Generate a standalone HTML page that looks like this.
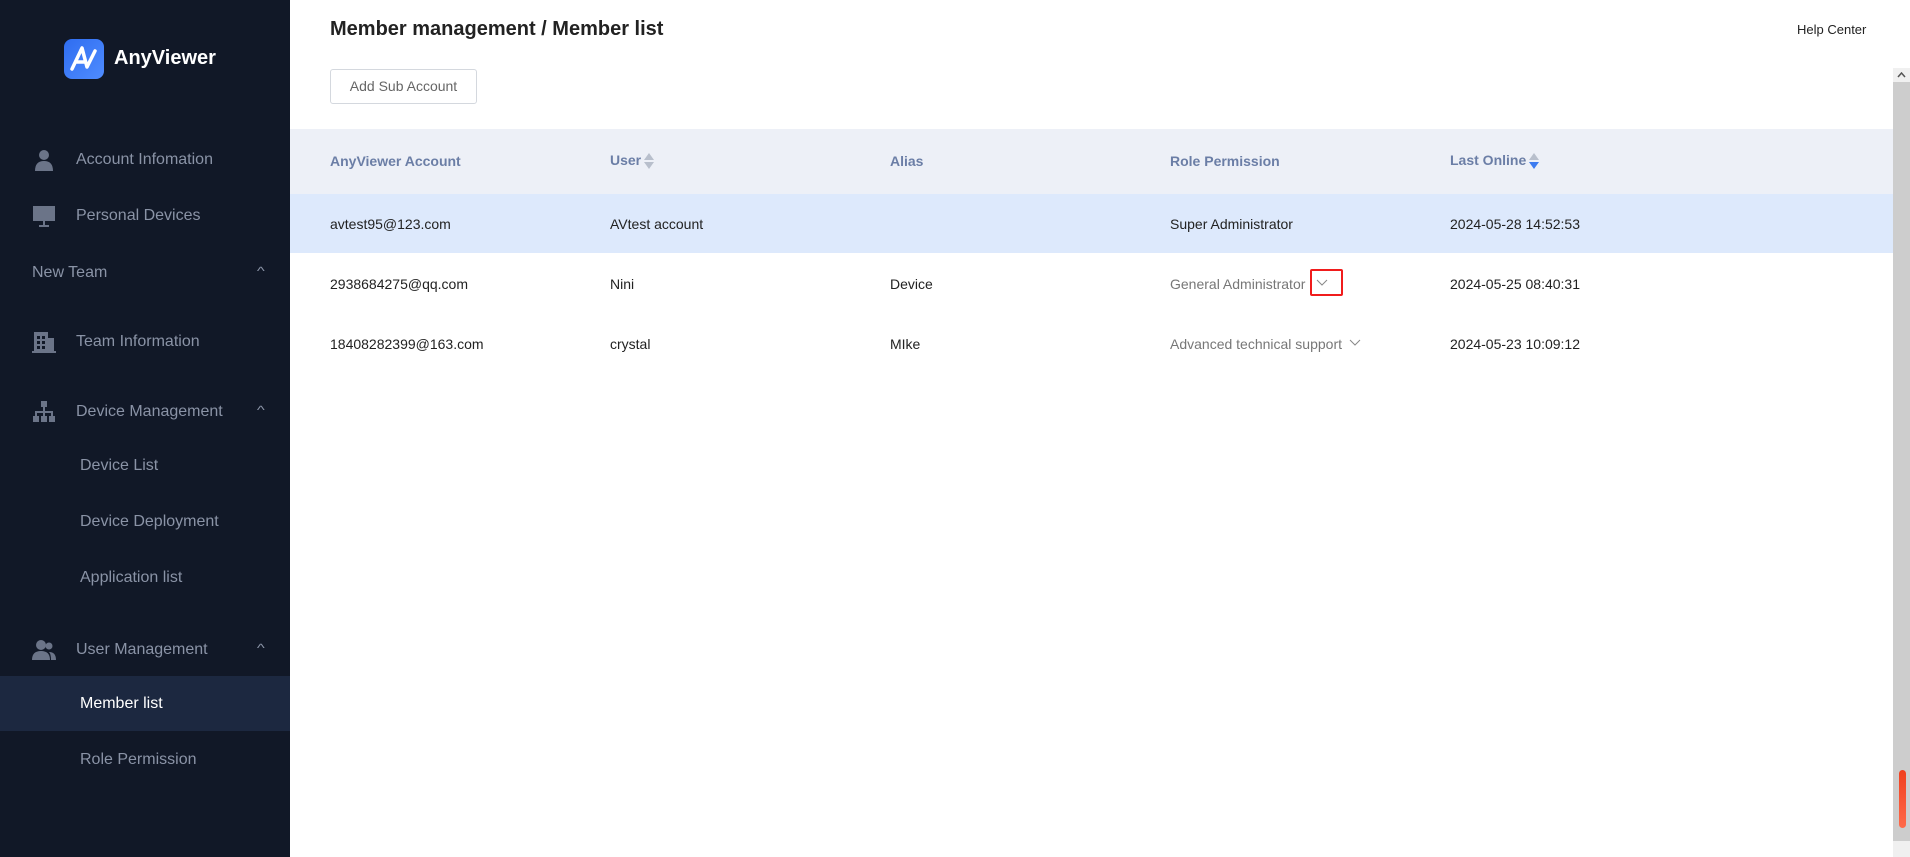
<!DOCTYPE html>
<html><head><meta charset="utf-8"><style>
*{margin:0;padding:0;box-sizing:border-box}
body{width:1910px;height:857px;overflow:hidden;background:#fff;font-family:"Liberation Sans",sans-serif;position:relative}
.sb{position:absolute;left:0;top:0;width:290px;height:857px;background:#111827}
.logo{position:absolute;left:64px;top:39px;width:40px;height:40px;border-radius:8px;background:linear-gradient(135deg,#2f6df0,#4f8cff)}
.brand{position:absolute;left:114px;top:47px;color:#fff;font-weight:bold;font-size:20px}
.mi{position:absolute;color:#8a93a6;font-size:16px;line-height:20px}
.ic{position:absolute;left:32px;width:24px;height:24px}
.car{position:absolute;left:258px;color:#8a93a6;font-size:12px;transform:scaleX(1.4)}
.act{position:absolute;left:0;top:676px;width:290px;height:55px;background:#1c2840}
.t{position:absolute;font-size:14px;color:#222;line-height:18px}
.h{position:absolute;font-size:14px;color:#6b7ea6;font-weight:bold;line-height:18px}
.ar{display:inline-block;vertical-align:middle;margin-left:3px}
</style></head><body>
<div class="sb">
<div class="logo"><svg width="40" height="40" viewBox="0 0 40 40"><path d="M8 30 L18 9 L23 28 L31 12 M12 23 L21 23" stroke="#fff" stroke-width="3.5" fill="none" stroke-linejoin="round" stroke-linecap="round"/></svg></div>
<div class="brand">AnyViewer</div>
<svg class="ic" style="top:148px" viewBox="0 0 24 24"><circle cx="12" cy="7" r="5" fill="#6b7488"/><path d="M3 23 Q3 13 12 13 Q21 13 21 23Z" fill="#6b7488"/></svg>
<div class="mi" style="left:76px;top:150px">Account Infomation</div>
<svg class="ic" style="top:205px" viewBox="0 0 24 24"><rect x="1" y="1" width="22" height="15" fill="#6b7488"/><rect x="11" y="16" width="2" height="4" fill="#6b7488"/><rect x="7" y="20" width="10" height="2" fill="#6b7488"/></svg>
<div class="mi" style="left:76px;top:206px">Personal Devices</div>
<div class="mi" style="left:32px;top:263px">New Team</div><div class="car" style="top:264px">^</div>
<svg class="ic" style="top:330px" viewBox="0 0 24 24"><rect x="2" y="2" width="14" height="20" fill="#6b7488"/><rect x="16" y="8" width="6" height="14" fill="#6b7488"/><rect x="0" y="21" width="24" height="2" fill="#6b7488"/><g fill="#111827"><rect x="5" y="6" width="3" height="3"/><rect x="10" y="6" width="3" height="3"/><rect x="5" y="11" width="3" height="3"/><rect x="10" y="11" width="3" height="3"/><rect x="5" y="16" width="3" height="3"/><rect x="10" y="16" width="3" height="3"/></g></svg>
<div class="mi" style="left:76px;top:332px">Team Information</div>
<svg class="ic" style="top:400px" viewBox="0 0 24 24"><g fill="#6b7488"><rect x="9" y="1" width="6" height="6"/><rect x="11" y="7" width="2" height="5"/><rect x="3" y="11" width="18" height="2"/><rect x="1" y="16" width="6" height="6"/><rect x="9" y="16" width="6" height="6"/><rect x="17" y="16" width="6" height="6"/><rect x="3" y="12" width="2" height="4"/><rect x="11" y="12" width="2" height="4"/><rect x="19" y="12" width="2" height="4"/></g></svg>
<div class="mi" style="left:76px;top:402px">Device Management</div><div class="car" style="top:403px">^</div>
<div class="mi" style="left:80px;top:456px">Device List</div>
<div class="mi" style="left:80px;top:512px">Device Deployment</div>
<div class="mi" style="left:80px;top:568px">Application list</div>
<svg class="ic" style="top:638px" viewBox="0 0 24 24"><g fill="#6b7488"><circle cx="9" cy="7" r="5"/><path d="M0 22 Q0 13 9 13 Q18 13 18 22Z"/><circle cx="17" cy="8" r="3.5"/><path d="M17 14 Q24 14 24 22 L19 22 Q19 16 17 14Z"/></g></svg>
<div class="mi" style="left:76px;top:640px">User Management</div><div class="car" style="top:641px">^</div>
<div class="act"></div>
<div class="mi" style="left:80px;top:694px;color:#fff">Member list</div>
<div class="mi" style="left:80px;top:750px">Role Permission</div>
</div>
<div style="position:absolute;left:330px;top:18px;font-size:20px;font-weight:bold;color:#222">Member management / Member list</div>
<div style="position:absolute;left:1797px;top:22px;font-size:13px;color:#222">Help Center</div>
<div style="position:absolute;left:330px;top:69px;width:147px;height:35px;border:1px solid #d4d8de;border-radius:3px;font-size:14px;color:#666;text-align:center;line-height:33px">Add Sub Account</div>
<div style="position:absolute;left:290px;top:129px;width:1603px;height:65px;background:#edf0f7"></div>
<div style="position:absolute;left:290px;top:194px;width:1603px;height:59px;background:#dde9fc"></div>
<div class="h" style="left:330px;top:152px">AnyViewer Account</div>
<div class="h" style="left:610px;top:151px">User<svg class="ar" width="10" height="18" viewBox="0 0 10 18"><path d="M5 1 L10 8 L0 8Z" fill="#b8bfcc"/><path d="M5 17 L10 10 L0 10Z" fill="#b8bfcc"/></svg></div>
<div class="h" style="left:890px;top:152px">Alias</div>
<div class="h" style="left:1170px;top:152px">Role Permission</div>
<div class="h" style="left:1450px;top:151px">Last Online<svg class="ar" width="10" height="18" viewBox="0 0 10 18"><path d="M5 1 L10 8 L0 8Z" fill="#b8bfcc"/><path d="M5 17 L10 10 L0 10Z" fill="#3d7cf0"/></svg></div>
<div class="t" style="left:330px;top:215px">avtest95@123.com</div><div class="t" style="left:610px;top:215px">AVtest account</div><div class="t" style="left:1170px;top:215px">Super Administrator</div><div class="t" style="left:1450px;top:215px">2024-05-28 14:52:53</div>
<div class="t" style="left:330px;top:275px">2938684275@qq.com</div><div class="t" style="left:610px;top:275px">Nini</div><div class="t" style="left:890px;top:275px">Device</div><div class="t" style="left:1170px;top:275px;color:#777">General Administrator</div><div class="t" style="left:1450px;top:275px">2024-05-25 08:40:31</div>
<div style="position:absolute;left:1310px;top:269px;width:33px;height:27px;border:2px solid #f01c1c;border-radius:2px"></div>
<svg style="position:absolute;left:1316px;top:279px" width="12" height="8"><path d="M1 1 L6 6 L11 1" stroke="#888" fill="none"/></svg>
<div class="t" style="left:330px;top:335px">18408282399@163.com</div><div class="t" style="left:610px;top:335px">crystal</div><div class="t" style="left:890px;top:335px">MIke</div><div class="t" style="left:1170px;top:335px;color:#777">Advanced technical support</div>
<svg style="position:absolute;left:1349px;top:339px" width="12" height="8"><path d="M1 1 L6 6 L11 1" stroke="#888" fill="none"/></svg>
<div class="t" style="left:1450px;top:335px">2024-05-23 10:09:12</div>
<div style="position:absolute;left:1893px;top:68px;width:17px;height:773px;background:#cdcdcd"></div>
<div style="position:absolute;left:1893px;top:68px;width:17px;height:14px;background:#f0f0f0"></div>
<svg style="position:absolute;left:1897px;top:72px" width="9" height="6"><path d="M1 5 L4.5 1 L8 5" stroke="#555" stroke-width="1.5" fill="none"/></svg>
<div style="position:absolute;left:1899px;top:770px;width:7px;height:58px;border-radius:4px;background:linear-gradient(#f0401e,#ff6a4a)"></div>
<div style="position:absolute;left:1893px;top:841px;width:17px;height:16px;background:#f0f0f0"></div>
</body></html>
